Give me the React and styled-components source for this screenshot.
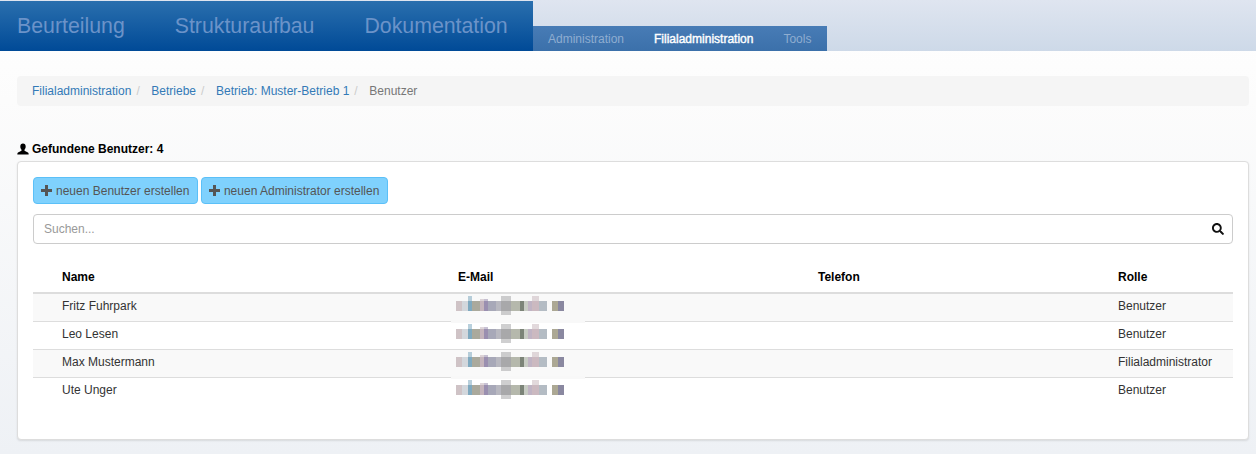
import React from "react";
import styled, { createGlobalStyle } from "styled-components";
import { FaSearch } from "react-icons/fa";

const GlobalStyle = createGlobalStyle`
  html, body {
    margin: 0;
    padding: 0;
  }
  body {
    height: 454px;
    overflow: hidden;
    font-family: "Liberation Sans", Arial, sans-serif;
    font-size: 12px;
    color: #333;
    background: linear-gradient(to bottom, #ffffff 0%, #fcfcfc 100px, #eef1f5 100%);
  }
`;

const Header = styled.header`
  display: flex;
  align-items: flex-end;
  height: 51px;
  background: linear-gradient(to bottom, #dfe5f0, #cdd9e8);
`;

const MainNav = styled.nav`
  display: flex;
  box-sizing: border-box;
  width: 533px;
  height: 50px;
  padding: 0 0 0 17px;
  gap: 50px;
  align-items: center;
  background: linear-gradient(to bottom, #2a6fae, #004a97);
`;

const MainLink = styled.a`
  font-size: 21.3px;
  color: #6b93c9;
`;

const SubNav = styled.nav`
  display: flex;
  box-sizing: border-box;
  width: 294px;
  height: 25px;
  padding-left: 15px;
  gap: 30px;
  align-items: center;
  background: linear-gradient(to bottom, #487cb6, #3b70aa);
`;

const SubLink = styled.a`
  font-size: 12px;
  color: ${(p) => (p.$active ? "#fff" : "#8fadd0")};
  -webkit-text-stroke: ${(p) => (p.$active ? "0.4px #fff" : "0")};
`;

const Content = styled.main`
  padding: 25px 7px 0 17px;
`;

const Breadcrumb = styled.ol`
  display: flex;
  align-items: center;
  height: 30px;
  margin: 0 0 35px;
  padding: 0 15px;
  list-style: none;
  background: #f5f5f5;
  border-radius: 4px;

  li + li::before {
    content: "/";
    padding: 0 5px;
    margin-right: 6.6px;
    color: #ccc;
  }
`;

const Crumb = styled.li`
  color: ${(p) => (p.$current ? "#777" : "#337ab7")};
`;

const Found = styled.div`
  display: flex;
  align-items: center;
  gap: 3px;
  height: 16px;
  margin-bottom: 4px;
  font-weight: bold;
  color: #000;
`;

const Panel = styled.section`
  box-sizing: border-box;
  height: 279px;
  padding: 15px 15px 0;
  background: #fff;
  border: 1px solid #ddd;
  border-radius: 4px;
  box-shadow: 0 1px 2px rgba(0, 0, 0, 0.1);
`;

const Actions = styled.div`
  display: flex;
  gap: 3px;
  margin-bottom: 10px;
`;

const ActionButton = styled.button`
  display: flex;
  align-items: center;
  gap: 4px;
  box-sizing: border-box;
  height: 27px;
  padding: 0 7.5px 0 7px;
  font: inherit;
  color: #555;
  background: #7fd1fd;
  border: 1px solid #5bc0f8;
  border-radius: 4px;
`;

const SearchBox = styled.div`
  display: flex;
  align-items: center;
  justify-content: space-between;
  box-sizing: border-box;
  height: 30px;
  margin-bottom: 21px;
  padding: 0 8px 0 10px;
  color: #999;
  border: 1px solid #ccc;
  border-radius: 4px;
`;

const Table = styled.table`
  width: 100%;
  table-layout: fixed;
  border-collapse: collapse;
`;

const Head = styled.th`
  box-sizing: border-box;
  height: 28px;
  width: ${(p) => p.$w}px;
  padding: 0 0 4px ${(p) => p.$pad || 0}px;
  text-align: left;
  font-size: 12px;
  color: #000;
  border-bottom: 2px solid #ddd;
`;

const Row = styled.tr`
  background: ${(p) => (p.$odd ? "#f9f9f9" : "#fff")};
`;

const Cell = styled.td`
  box-sizing: border-box;
  height: 28px;
  padding: 0 0 2px ${(p) => p.$pad || 0}px;
  color: #333;
  border-bottom: 1px solid ${(p) => (p.$last ? "transparent" : "#ddd")};
`;

const BlurWrap = styled.div`
  position: relative;
  margin-left: -2px;

  /* Rest vom Verpixeln, ragt in die weissen Zeilen */
  &::before {
    content: "";
    display: ${(p) => (p.$band ? "block" : "none")};
    position: absolute;
    left: -5px;
    top: -4px;
    width: 134px;
    height: 3px;
    background: #f8f8f8;
  }
`;

const BlurSvg = styled.svg`
  display: block;
  filter: blur(0.7px);
`;

// verpixelte Mail-Adresse: [breite, farbe, hoehe oben, hoehe unten]
const tiles = [
  [6, "#cfc3c6", 0, 0],
  [6, "#d3d7dc", 0, 0],
  [4, "#7fa9bf", 5, 0],
  [8, "#aaa99c", 0, 0],
  [4, "#c4b4bc", 2, 0],
  [4, "#9a8fb0", 2, 0],
  [8, "#a7a8b8", 0, 0],
  [5, "#b8b8c0", 0, 0],
  [10, "#a8a8aa", 5, 4],
  [9, "#b5b8ac", 0, 0],
  [4, "#7c8478", 0, 0],
  [4, "#c8ccc4", 0, 0],
  [4, "#c0b4c4", 0, 0],
  [7, "#cbb9c0", 5, 0],
  [8, "#b4bcc4", 0, 0],
  [5, "transparent", 0, 0],
  [6, "#aca894", 0, 0],
  [6, "#8a88a0", 0, 0],
];

const Blurred = ({ band }) => {
  let x = 0;
  return (
    <BlurWrap $band={band}>
      <BlurSvg width="110" height="20">
        {tiles.map(([w, c, up, down], i) => {
          const rect = (
            <g key={i}>
              {(up > 0 || down > 0) && (
                <rect x={x} y={5 - up} width={w} height={10 + up + down} fill={c} opacity="0.55" />
              )}
              <rect x={x} y="5" width={w} height="10" fill={c} />
            </g>
          );
          x += w;
          return rect;
        })}
      </BlurSvg>
    </BlurWrap>
  );
};

const UserIcon = () => (
  <svg width="12" height="12" viewBox="0 0 12 12" fill="#000">
    <path d="M6 .5C4.3.5 3.3 1.8 3.3 3.6c0 1.3.5 2.4 1.2 3.1v1L1 9.5C.5 9.9.3 10.5.3 11.5h11.4c0-1-.2-1.6-.7-2L7.5 7.7v-1c.7-.7 1.2-1.8 1.2-3.1C8.7 1.8 7.7.5 6 .5z" />
  </svg>
);

const PlusIcon = () => (
  <svg width="11" height="11" viewBox="0 0 11 11" fill="#555">
    <path d="M4 0h3v4h4v3H7v4H4V7H0V4h4z" />
  </svg>
);

const users = [
  ["Fritz Fuhrpark", "Benutzer"],
  ["Leo Lesen", "Benutzer"],
  ["Max Mustermann", "Filialadministrator"],
  ["Ute Unger", "Benutzer"],
];

const App = () => (
  <>
    <GlobalStyle />
    <Header>
      <MainNav>
        <MainLink>Beurteilung</MainLink>
        <MainLink>Strukturaufbau</MainLink>
        <MainLink>Dokumentation</MainLink>
      </MainNav>
      <SubNav>
        <SubLink>Administration</SubLink>
        <SubLink $active>Filialadministration</SubLink>
        <SubLink>Tools</SubLink>
      </SubNav>
    </Header>
    <Content>
      <Breadcrumb>
        <Crumb>Filialadministration</Crumb>
        <Crumb>Betriebe</Crumb>
        <Crumb>Betrieb: Muster-Betrieb 1</Crumb>
        <Crumb $current>Benutzer</Crumb>
      </Breadcrumb>
      <Found>
        <UserIcon />
        Gefundene Benutzer: 4
      </Found>
      <Panel>
        <Actions>
          <ActionButton>
            <PlusIcon />
            neuen Benutzer erstellen
          </ActionButton>
          <ActionButton>
            <PlusIcon />
            neuen Administrator erstellen
          </ActionButton>
        </Actions>
        <SearchBox>
          Suchen...
          <FaSearch size={12} color="#111" />
        </SearchBox>
        <Table>
          <thead>
            <tr>
              <Head $w={425} $pad={29}>Name</Head>
              <Head $w={360}>E-Mail</Head>
              <Head $w={300}>Telefon</Head>
              <Head>Rolle</Head>
            </tr>
          </thead>
          <tbody>
            {users.map(([name, role], i) => {
              const last = i === users.length - 1;
              return (
                <Row key={name} $odd={i % 2 === 0}>
                  <Cell $pad={29} $last={last}>{name}</Cell>
                  <Cell $last={last}><Blurred band={i % 2 === 1} /></Cell>
                  <Cell $last={last} />
                  <Cell $last={last}>{role}</Cell>
                </Row>
              );
            })}
          </tbody>
        </Table>
      </Panel>
    </Content>
  </>
);

export default App;
